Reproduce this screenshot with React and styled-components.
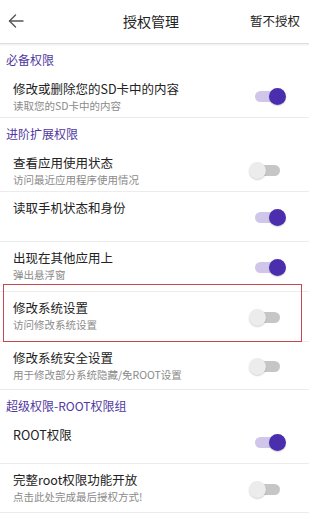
import styled, { createGlobalStyle } from 'styled-components';

const GlobalStyle = createGlobalStyle`
    * { box-sizing: border-box; }
    body {
        margin: 0;
        background: #ffffff;
        font-family: "Noto Sans CJK SC", "Noto Sans", sans-serif;
    }
`

const groups = [
    {
        title: "必备权限",
        items: [
            { name: "修改或删除您的SD卡中的内容", desc: "读取您的SD卡中的内容", on: true, h: 45 },
        ],
    },
    {
        title: "进阶扩展权限",
        items: [
            { name: "查看应用使用状态", desc: "访问最近应用程序使用情况", on: false, h: 45 },
            { name: "读取手机状态和身份", desc: "", on: true, h: 50 },
            { name: "出现在其他应用上", desc: "弹出悬浮窗", on: true, h: 50 },
            { name: "修改系统设置", desc: "访问修改系统设置", on: false, h: 50, marked: true },
            { name: "修改系统安全设置", desc: "用于修改部分系统隐藏/免ROOT设置", on: false, h: 48 },
        ],
    },
    {
        title: "超级权限-ROOT权限组",
        items: [
            { name: "ROOT权限", desc: "", on: true, h: 45 },
            { name: "完整root权限功能开放", desc: "点击此处完成最后授权方式!", on: false, h: 49 },
        ],
    },
];

export default function App() {
    return (
        <>
            <GlobalStyle />
            <Page>
                <Header>
                    <Back>
                        <svg width="16" height="14" viewBox="0 0 16 14" fill="none" stroke="#555" strokeWidth="1.4" strokeLinecap="round" strokeLinejoin="round">
                            <path d="M15 7H1.5" />
                            <path d="M7.5 1L1.5 7L7.5 13" />
                        </svg>
                    </Back>
                    <Title>授权管理</Title>
                    <Skip>暂不授权</Skip>
                </Header>
                {groups.map(group => (
                    <section key={group.title}>
                        <GroupTitle>{group.title}</GroupTitle>
                        {group.items.map(item => (
                            <Row key={item.name} height={item.h}>
                                <Texts>
                                    <Name>{item.name}</Name>
                                    {item.desc !== "" && <Desc>{item.desc}</Desc>}
                                </Texts>
                                <Switch>
                                    <Track on={item.on} />
                                    <Thumb on={item.on} />
                                </Switch>
                                {item.marked && <Highlight />}
                            </Row>
                        ))}
                    </section>
                ))}
            </Page>
        </>
    )
}

const Page = styled.div`
    width: 309px;
    height: 513px;
    overflow: hidden;
    background: #ffffff;
`
const Header = styled.div`
    height: 44px;
    display: grid;
    grid-template-columns: 1fr auto 1fr;
    align-items: center;
    padding: 0 9px 2px 8px;
    border-bottom: 1px solid #dedede;
    box-shadow: 0 1px 2px rgba(0, 0, 0, 0.08);
`
const Back = styled.div`
    display: flex;
    align-items: center;
    padding-top: 1px;
`
const Title = styled.div`
    font-size: 14px;
    color: #222222;
    padding-right: 6px;
`
const Skip = styled.div`
    justify-self: end;
    font-size: 12.5px;
    color: #222222;
`
const GroupTitle = styled.div`
    height: 29px;
    display: flex;
    align-items: center;
    padding: 2px 0 0 6px;
    font-size: 12px;
    color: #5038a0;
`
const Row = styled.div`
    position: relative;
    height: ${props => props.height}px;
    display: flex;
    justify-content: space-between;
    padding: 7px 23px 0 13px;
    border-bottom: 1px solid #ececec;
`
const Texts = styled.div`
    display: flex;
    flex-direction: column;
`
const Name = styled.div`
    font-size: 12.5px;
    line-height: 18px;
    color: #222222;
`
const Desc = styled.div`
    font-size: 10.5px;
    line-height: 15px;
    color: #8a8a8a;
`
const Switch = styled.div`
    position: relative;
    align-self: center;
    width: 37px;
    height: 17px;
    margin-bottom: 5px;
    flex-shrink: 0;
`
const Track = styled.div`
    position: absolute;
    left: 6px;
    right: 6px;
    top: 3px;
    height: 11px;
    border-radius: 6px;
    background: ${props => props.on ? "#cfc6ea" : "#c6c6c6"};
`
const Thumb = styled.div`
    position: absolute;
    top: 0;
    left: ${props => props.on ? "20px" : "0"};
    width: 17px;
    height: 17px;
    border-radius: 50%;
    background: ${props => props.on ? "#4a2eae" : "#ececec"};
    box-shadow: 0 1px 1.5px rgba(0, 0, 0, 0.18);
`
const Highlight = styled.div`
    position: absolute;
    top: -8px;
    left: 3px;
    right: 7px;
    bottom: -1px;
    border: 1.5px solid #c8474c;
    pointer-events: none;
`
